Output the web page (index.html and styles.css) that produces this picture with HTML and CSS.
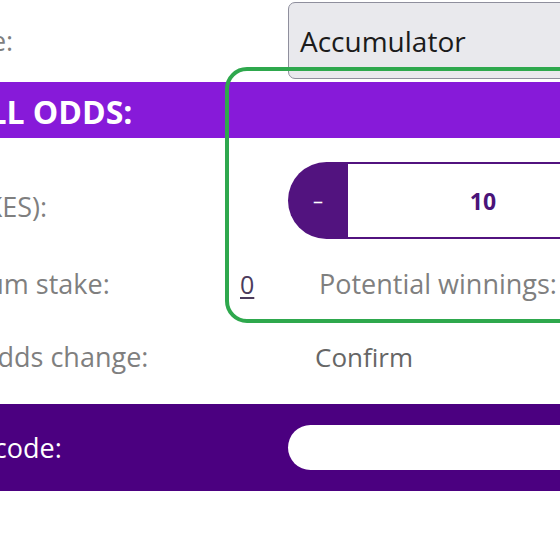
FILE: index.html
```html
<!DOCTYPE html>
<html lang="en">
<head>
    <meta charset="UTF-8">
    <meta name="viewport" content="width=device-width, initial-scale=1.0">
    <title>Bet Slip</title>
    <link rel="stylesheet" href="styles.css">
</head>
<body>
    <div class="slip">
        <div class="row row-type">
            <span class="label">Bet type:</span>
            <div class="select">Accumulator</div>
        </div>
        <div class="odds-bar"><span>OVERALL ODDS:</span></div>
        <div class="row row-stake">
            <span class="label">Stake (KES):</span>
            <div class="stepper">
                <button class="step-btn minus">&ndash;</button>
                <input class="step-input" type="text" value="10">
                <button class="step-btn plus">+</button>
            </div>
        </div>
        <div class="row row-info">
            <span class="label label-short">Maximum stake:</span>
            <a class="max-stake" href="#">0</a>
            <span class="winnings">Potential winnings:</span>
        </div>
        <div class="row row-confirm">
            <span class="label label-confirm">Accept odds change:</span>
            <span class="confirm">Confirm</span>
        </div>
        <div class="promo-bar">
            <span class="label">Promo code:</span>
            <input class="promo-input" type="text">
        </div>
        <div class="highlight"></div>
    </div>
</body>
</html>
```

FILE: styles.css
```css
body {margin: 0; overflow: hidden; background: #ffffff; font-family: "Open Sans", "Noto Sans", sans-serif;}
.slip {position: relative; margin-left: -98px; width: 1000px;}
.row {display: flex; align-items: center;}
.label {width: 386px; flex: none; font-size: 27px; color: #7f7f7f; line-height: 32px; white-space: nowrap;}

/* bet type */
.row-type {height: 82px; align-items: flex-start;}
.row-type .label {margin-top: 25px;}
.select {margin-top: 2px; height: 77px; width: 400px; box-sizing: border-box; background: #e9e9ed; border: 1.5px solid #8f8f9d; border-radius: 7px; padding-left: 11px; display: flex; align-items: center; font-size: 28px; color: #1b1b1b;}

/* odds header */
.odds-bar {height: 56px; background: #871ad9; display: flex; align-items: center;}
.odds-bar span {font-size: 32px; font-weight: 700; color: #ffffff; margin-left: -21px; margin-top: 3px; white-space: nowrap;}

/* stake stepper */
.row-stake {margin-top: 24px;}
.row-stake .label {margin-top: 13px;}
.stepper {display: flex; height: 77px;}
.step-btn {width: 60px; border: 0; background: #52137f; color: #ffffff; font-size: 20px; font-family: inherit; padding: 0;}
.minus {border-radius: 39px 0 0 39px;}
.step-input {width: 270px; box-sizing: border-box; border: 2px solid #52137f; border-left: 0; border-right: 0; text-align: center; font-family: inherit; font-size: 23px; font-weight: 700; color: #4a1479; outline: none; padding: 0;}

/* info rows */
.row-info {margin-top: 29px;}
.label-short {width: 338px;}
.max-stake {width: 79px; font-size: 25px; line-height: 32px; color: #4b3b5c; text-decoration: underline; text-underline-offset: 3px;}
.winnings {font-size: 27px; line-height: 32px; color: #7f7f7f; white-space: nowrap;}
.row-confirm {margin-top: 41px;}
.label-confirm {width: 425px; margin-left: -12px;}
.confirm {font-size: 26px; line-height: 32px; color: #666666;}

/* promo */
.promo-bar {margin-top: 31px; height: 87px; background: #4b0080; display: flex; align-items: center;}
.promo-bar .label {color: #ffffff;}
.promo-input {height: 45px; width: 400px; box-sizing: border-box; border: 0; border-radius: 23px; background: #ffffff; outline: none;}

/* annotation frame */
.highlight {position: absolute; left: 323px; top: 67px; width: 600px; height: 256px; box-sizing: border-box; border: 4px solid #2ea84d; border-radius: 22px;}
```
